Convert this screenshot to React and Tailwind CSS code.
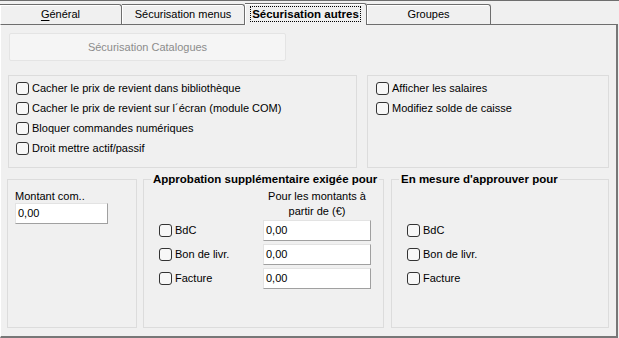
import React from 'react';

const font = { fontFamily: '"Liberation Sans", Arial, sans-serif' };

const Check = ({ label }) => (
  <label className="flex items-center gap-[3px] h-[20px] text-[11px] text-black leading-none">
    <span className="w-[13px] h-[13px] shrink-0 rounded-[3px] border border-[#333333] bg-[#f7f7f7]"></span>
    <span>{label}</span>
  </label>
);

const Field = ({ w = 'w-[108px]' }) => (
  <div
    className={`${w} h-[21px] bg-white border border-t-[#e3e3e3] border-l-[#e3e3e3] border-r-[#a0a0a0] border-b-[#a0a0a0] pl-[2px] flex items-center text-[11px] text-black`}
  >
    0,00
  </div>
);

const Tab = ({ children, active, w }) =>
  active ? (
    <div
      className={`${w} h-[22px] -mb-px relative z-10 bg-[#f0f0f0] border-t border-r border-[#6e6e6e] rounded-tr-[3px] shadow-[inset_1px_1px_0_#ffffff] flex items-start justify-center pt-[2px]`}
    >
      <span className="border border-dotted border-black px-[1px] leading-[14px] text-[11.5px] font-bold text-black">
        {children}
      </span>
    </div>
  ) : (
    <div
      className={`${w} h-[20px] bg-[#f0f0f0] border-t border-r border-[#6e6e6e] rounded-tr-[3px] shadow-[inset_1px_1px_0_#ffffff] flex items-center justify-center text-[11px] text-black`}
    >
      {children}
    </div>
  );

const Legend = ({ children }) => (
  <div className="-mt-[8px] ml-[7px] w-fit px-[2px] bg-[#f0f0f0] leading-[14px] text-[11.5px] font-bold text-black">
    {children}
  </div>
);

export default function App() {
  return (
    <div style={font} className="w-[619px] h-[338px] bg-[#f0f0f0] border-t border-[#6e6e6e] overflow-hidden">
      {/* tab strip */}
      <div className="h-[23px] flex items-end">
        <Tab w="w-[122px]">
          <span>
            <span className="underline underline-offset-2">G</span>énéral
          </span>
        </Tab>
        <Tab w="w-[123px]">Sécurisation menus</Tab>
        <Tab w="w-[122px]" active>
          Sécurisation autres
        </Tab>
        <Tab w="w-[124px]">Groupes</Tab>
      </div>

      {/* panel */}
      <div className="w-[618px] h-[314px] border-t border-l border-r-2 border-b-2 border-t-[#6e6e6e] border-l-white border-r-[#777777] border-b-[#777777] flex flex-col">
        <button className="ml-[8px] mt-[8px] w-[277px] h-[28px] bg-[#f5f5f5] border border-[#e4e4e4] rounded-[2px] text-[11px] text-[#8c8c8c]">
          Sécurisation Catalogues
        </button>

        <div className="flex ml-[7px] mt-[14px] gap-[10px]">
          <div className="w-[349px] h-[93px] border border-[#dcdcdc] pt-[2px] pl-[7px]">
            <Check label="Cacher le prix de revient dans bibliothèque" />
            <Check label="Cacher le prix de revient sur l´écran (module COM)" />
            <Check label="Bloquer commandes numériques" />
            <Check label="Droit mettre actif/passif" />
          </div>
          <div className="w-[242px] h-[93px] border border-[#dcdcdc] pt-[2px] pl-[8px]">
            <Check label="Afficher les salaires" />
            <Check label="Modifiez solde de caisse" />
          </div>
        </div>

        <div className="flex ml-[6px] mt-[11px]">
          <div className="w-[130px] h-[149px] border border-[#dcdcdc] pl-[7px] pt-[9px]">
            <div className="text-[11px] leading-[14px] text-black">Montant com..</div>
            <Field w="w-[93px]" />
          </div>

          <div className="ml-[6px] w-[241px] h-[149px] border border-[#dcdcdc]">
            <Legend>Approbation supplémentaire exigée pour</Legend>
            <div className="grid grid-cols-[104px_108px] pl-[15px] mt-[3px]">
              <div></div>
              <div className="text-center text-[11px] leading-[15px] text-black">
                Pour les montants à
                <br />
                partir de (€)
              </div>
            </div>
            <div className="grid grid-cols-[104px_108px] gap-y-[3px] pl-[15px] mt-[1px]">
              <div className="h-[21px] flex items-center"><Check label="BdC" /></div>
              <Field />
              <div className="h-[21px] flex items-center"><Check label="Bon de livr." /></div>
              <Field />
              <div className="h-[21px] flex items-center"><Check label="Facture" /></div>
              <Field />
            </div>
          </div>

          <div className="ml-[7px] w-[218px] h-[149px] border border-[#dcdcdc]">
            <Legend>En mesure d'approuver pour</Legend>
            <div className="flex flex-col gap-y-[3px] pl-[15px] mt-[34px]">
              <div className="h-[21px] flex items-center"><Check label="BdC" /></div>
              <div className="h-[21px] flex items-center"><Check label="Bon de livr." /></div>
              <div className="h-[21px] flex items-center"><Check label="Facture" /></div>
            </div>
          </div>
        </div>
      </div>
    </div>
  );
}
